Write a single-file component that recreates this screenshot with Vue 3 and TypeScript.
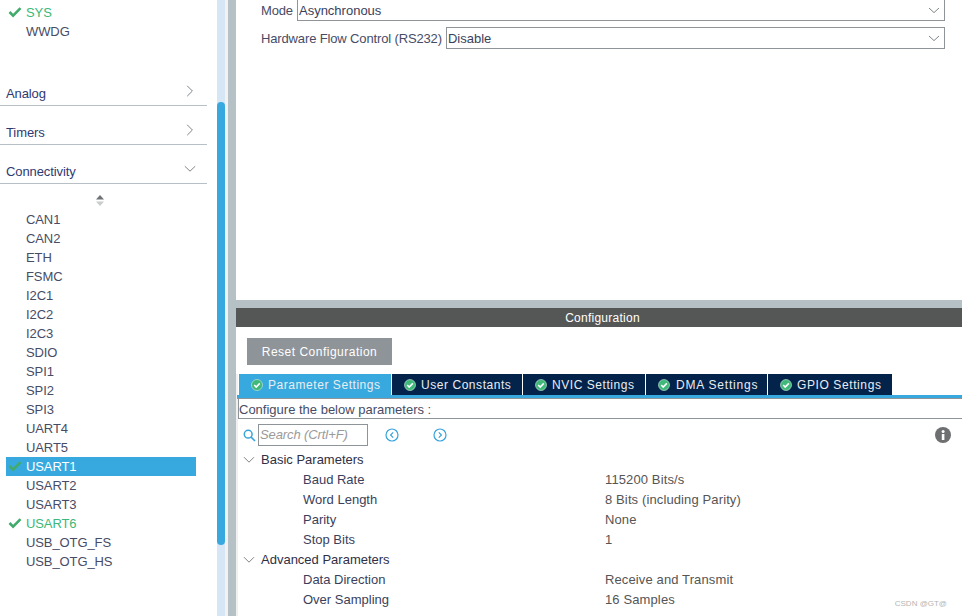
<script setup lang="ts">
interface Peripheral {
  name: string
  status?: 'ok'
  selected?: boolean
}

const topItems: Peripheral[] = [{ name: 'SYS', status: 'ok' }, { name: 'WWDG' }]

const connectivity: Peripheral[] = [
  { name: 'CAN1' },
  { name: 'CAN2' },
  { name: 'ETH' },
  { name: 'FSMC' },
  { name: 'I2C1' },
  { name: 'I2C2' },
  { name: 'I2C3' },
  { name: 'SDIO' },
  { name: 'SPI1' },
  { name: 'SPI2' },
  { name: 'SPI3' },
  { name: 'UART4' },
  { name: 'UART5' },
  { name: 'USART1', status: 'ok', selected: true },
  { name: 'USART2' },
  { name: 'USART3' },
  { name: 'USART6', status: 'ok' },
  { name: 'USB_OTG_FS' },
  { name: 'USB_OTG_HS' }
]

const categories = [
  { name: 'Analog', open: false },
  { name: 'Timers', open: false },
  { name: 'Connectivity', open: true }
]

const tabs = ['Parameter Settings', 'User Constants', 'NVIC Settings', 'DMA Settings', 'GPIO Settings']

const groups = [
  {
    title: 'Basic Parameters',
    rows: [
      ['Baud Rate', '115200 Bits/s'],
      ['Word Length', '8 Bits (including Parity)'],
      ['Parity', 'None'],
      ['Stop Bits', '1']
    ]
  },
  {
    title: 'Advanced Parameters',
    rows: [
      ['Data Direction', 'Receive and Transmit'],
      ['Over Sampling', '16 Samples']
    ]
  }
]
</script>

<template>
  <div class="app">
    <aside class="sidebar">
      <div class="sidebar__content">
        <ul class="periph periph--top">
          <li v-for="item in topItems" :key="item.name" class="periph__row" :class="{ 'periph__row--ok': item.status }">
            <svg v-if="item.status" class="periph__check" width="14" height="12" viewBox="0 0 14 12" aria-hidden="true">
              <path d="M1.5 6l3.6 3.6L12.5 2.2" fill="none" stroke="#41ab6b" stroke-width="2.6" />
            </svg>
            <span>{{ item.name }}</span>
          </li>
        </ul>
        <div v-for="cat in categories" :key="cat.name" class="category">
          <span>{{ cat.name }}</span>
          <svg v-if="cat.open" class="category__icon category__icon--open" width="12" height="8" viewBox="0 0 12 8" aria-hidden="true">
            <path d="M.8 1.2L6 6.2l5.2-5" fill="none" stroke="#7f8589" stroke-width="1" />
          </svg>
          <svg v-else class="category__icon" width="8" height="12" viewBox="0 0 8 12" aria-hidden="true">
            <path d="M1.2.8L6.4 6l-5.2 5.2" fill="none" stroke="#7f8589" stroke-width="1" />
          </svg>
        </div>
        <div class="sorter">
          <svg width="10" height="12" viewBox="0 0 10 12" aria-hidden="true">
            <path d="M5 0L9 4.5H1z" fill="#6f7376" />
            <path d="M1 6.5h8L5 11z" fill="#c9cccd" />
          </svg>
        </div>
        <ul class="periph">
          <li
            v-for="item in connectivity"
            :key="item.name"
            class="periph__row"
            :class="{ 'periph__row--ok': item.status, 'periph__row--selected': item.selected }"
          >
            <svg v-if="item.status" class="periph__check" width="14" height="12" viewBox="0 0 14 12" aria-hidden="true">
              <path d="M1.5 6l3.6 3.6L12.5 2.2" fill="none" stroke="#41ab6b" stroke-width="2.6" />
            </svg>
            <span>{{ item.name }}</span>
          </li>
        </ul>
      </div>
      <div class="scrollbar"><div class="scrollbar__thumb" /></div>
      <div class="gutter" />
    </aside>

    <main class="main">
      <section class="mode">
        <div class="field field--first">
          <label>Mode</label>
          <div class="select">
            <span>Asynchronous</span>
            <svg width="12" height="7" viewBox="0 0 12 7" aria-hidden="true"><path d="M1 1l5 4.6L11 1" fill="none" stroke="#7f8589" /></svg>
          </div>
        </div>
        <div class="field">
          <label>Hardware Flow Control (RS232)</label>
          <div class="select">
            <span>Disable</span>
            <svg width="12" height="7" viewBox="0 0 12 7" aria-hidden="true"><path d="M1 1l5 4.6L11 1" fill="none" stroke="#7f8589" /></svg>
          </div>
        </div>
      </section>

      <section class="config">
        <header class="config__title">Configuration</header>
        <button class="reset" type="button">Reset Configuration</button>
        <div class="config__body">
          <div class="tabs">
            <div v-for="(tab, i) in tabs" :key="tab" class="tab" :class="{ 'tab--active': i === 0 }">
              <svg width="12" height="12" viewBox="0 0 12 12" aria-hidden="true">
                <circle cx="6" cy="6" r="5.5" fill="#3fb87a" />
                <circle cx="6" cy="6" r="5.5" fill="none" stroke="#cfeedd" stroke-width=".6" />
                <path d="M3.2 6l2 2 3.6-3.6" fill="none" stroke="#fff" stroke-width="1.6" />
              </svg>
              <span>{{ tab }}</span>
            </div>
          </div>
          <div class="tabs__rule" />
          <div class="hint">Configure the below parameters :</div>
          <div class="toolbar">
            <svg class="toolbar__search" width="13" height="13" viewBox="0 0 13 13" aria-hidden="true">
              <circle cx="5.2" cy="5.2" r="3.9" fill="none" stroke="#38a3dc" stroke-width="1.5" />
              <path d="M8 8l4 4" stroke="#38a3dc" stroke-width="1.7" />
            </svg>
            <div class="search">Search (Crtl+F)</div>
            <svg class="toolbar__nav" width="14" height="14" viewBox="0 0 14 14" aria-hidden="true">
              <circle cx="7" cy="7" r="6" fill="none" stroke="#38a3dc" stroke-width="1.2" />
              <path d="M8.2 4.4L5.6 7l2.6 2.6" fill="none" stroke="#38a3dc" stroke-width="1.2" />
            </svg>
            <svg class="toolbar__nav toolbar__nav--next" width="14" height="14" viewBox="0 0 14 14" aria-hidden="true">
              <circle cx="7" cy="7" r="6" fill="none" stroke="#38a3dc" stroke-width="1.2" />
              <path d="M5.8 4.4L8.4 7l-2.6 2.6" fill="none" stroke="#38a3dc" stroke-width="1.2" />
            </svg>
            <svg class="toolbar__info" width="16" height="16" viewBox="0 0 16 16" aria-hidden="true">
              <circle cx="8" cy="8" r="8" fill="#6d6f71" />
              <rect x="6.8" y="7" width="2.6" height="6" fill="#fff" />
              <circle cx="8.1" cy="4.4" r="1.5" fill="#fff" />
            </svg>
          </div>
          <div class="params">
            <template v-for="group in groups" :key="group.title">
              <div class="params__group">
                <svg width="12" height="8" viewBox="0 0 12 8" aria-hidden="true"><path d="M1 1.2l5 5 5-5" fill="none" stroke="#7f8589" /></svg>
                <span>{{ group.title }}</span>
              </div>
              <div v-for="row in group.rows" :key="row[0]" class="params__row">
                <span>{{ row[0] }}</span>
                <span class="params__value">{{ row[1] }}</span>
              </div>
            </template>
          </div>
          <div class="watermark">CSDN @GT@</div>
        </div>
      </section>
    </main>
  </div>
</template>

<style>
html,
body {
  margin: 0;
  overflow: hidden;
  background: #fff;
}
</style>

<style scoped>
.app {
  width: 962px;
  height: 616px;
  display: flex;
  overflow: hidden;
  background: #fff;
  color: #3a3f5c;
  font-family: "Liberation Sans", Arial, sans-serif;
  font-size: 13px;
}

ul {
  list-style: none;
  margin: 0;
  padding: 0;
}

.sidebar {
  width: 236px;
  flex-shrink: 0;
  display: flex;
}

.sidebar__content {
  width: 217px;
  flex-shrink: 0;
  padding-top: 3px;
  box-sizing: border-box;
  letter-spacing: -.1px;
}

.periph {
  width: 190px;
  margin-left: 6px;
}

.periph--top {
  height: 65px;
}

.periph__row {
  height: 19px;
  line-height: 19px;
  padding-left: 20px;
  position: relative;
  color: #474c66;
}

.periph__row--ok {
  color: #3cb878;
}

.periph__row--selected {
  background: #38a9de;
  color: #fff;
}

.periph__check {
  position: absolute;
  left: 2px;
  top: 3px;
}

.category {
  width: 207px;
  height: 38px;
  margin-bottom: 1px;
  box-sizing: border-box;
  padding: 0 13px 0 6px;
  border-bottom: 1px solid #b6c0c6;
  display: flex;
  align-items: flex-end;
  justify-content: space-between;
  color: #2f3a72;
  line-height: 22px;
}

.category__icon {
  margin-bottom: 8px;
}

.category__icon--open {
  margin: 0 -2px 10px 0;
}

.sorter {
  height: 25px;
  padding-left: 95px;
  padding-top: 10px;
  box-sizing: border-box;
  line-height: 0;
}

.scrollbar {
  width: 8px;
  flex-shrink: 0;
  background: #d6e6f5;
  position: relative;
}

.scrollbar__thumb {
  position: absolute;
  left: 0;
  right: 0;
  top: 102px;
  height: 443px;
  border-radius: 4px;
  background: #38a9de;
}

.gutter {
  width: 11px;
  flex-shrink: 0;
  background: linear-gradient(to right, #f2f2f2 3px, #b6c1c6 3px);
}

.main {
  flex: 1;
  min-width: 0;
  display: flex;
  flex-direction: column;
}

.mode {
  height: 300px;
  flex-shrink: 0;
  box-sizing: border-box;
  padding: 0 17px 0 25px;
}

.field {
  display: flex;
  align-items: center;
  gap: 4px;
  height: 22px;
  margin-top: 6px;
}

.field--first {
  margin-top: 0;
  height: 21px;
}

.field--first .select {
  border-top: 0;
}

.field label {
  color: #474c66;
  white-space: nowrap;
  letter-spacing: -.14px;
}

.select {
  flex: 1;
  height: 100%;
  box-sizing: border-box;
  border: 1px solid #8f9499;
  display: flex;
  align-items: center;
  justify-content: space-between;
  padding: 0 4px 0 1px;
  color: #3a3f5c;
}

.config {
  flex: 1;
  min-height: 0;
  border-top: 8px solid #b6c1c6;
  display: flex;
  flex-direction: column;
}

.config__title {
  height: 19px;
  line-height: 20px;
  padding-left: 7px;
  background: #555756;
  color: #fff;
  text-align: center;
  font-size: 12px;
  letter-spacing: .25px;
}

.reset {
  width: 145px;
  height: 27px;
  margin: 11px 0 9px 11px;
  padding: 0;
  border: 0;
  background: #8f9499;
  color: #fff;
  font: inherit;
  font-size: 12px;
  letter-spacing: .5px;
}

.config__body {
  flex: 1;
  min-height: 0;
  border-left: 2px solid #f0f0f0;
  position: relative;
}

.tabs {
  display: grid;
  grid-template-columns: 153px 131px 123px 122px 124px;
  justify-content: start;
  height: 21px;
  padding-left: 1px;
}

.tab {
  display: flex;
  align-items: center;
  gap: 5px;
  box-sizing: border-box;
  padding-left: 12px;
  border-right: 1px solid #fff;
  background: #03234b;
  color: #e9edf2;
  font-size: 12px;
  letter-spacing: .55px;
}

.tab:nth-child(4) {
  letter-spacing: .8px;
  gap: 6px;
}

.tab:last-child {
  border-right: 0;
  letter-spacing: .6px;
}

.tab--active {
  background: #38a9de;
}

.tabs__rule {
  height: 3px;
  background: #38a9de;
  border-bottom: 1px solid #8f9499;
  margin-left: -1px;
}

.hint {
  height: 20px;
  line-height: 22px;
  box-sizing: border-box;
  border-left: 1px solid #8f9499;
  border-bottom: 1px solid #8f9499;
  padding-left: 0;
  color: #474c66;
}

.toolbar {
  display: flex;
  align-items: center;
  height: 24px;
  margin-top: 4px;
  padding: 0 11px 0 5px;
}

.toolbar__search {
  flex-shrink: 0;
  margin-right: 2px;
}

.search {
  width: 110px;
  height: 22px;
  line-height: 20px;
  box-sizing: border-box;
  border: 1px solid #8f9499;
  padding-left: 1px;
  color: #9a9a9a;
  font-style: italic;
  letter-spacing: -.1px;
}

.toolbar__nav {
  margin-left: 17px;
}

.toolbar__nav--next {
  margin-left: 34px;
}

.toolbar__info {
  margin-left: auto;
}

.params {
  padding-top: 3px;
}

.params__group {
  height: 20px;
  line-height: 20px;
  display: flex;
  align-items: center;
  gap: 6px;
  padding-left: 5px;
  color: #2f2f45;
}

.params__row {
  height: 20px;
  line-height: 20px;
  display: flex;
  padding-left: 65px;
}

.params__row span:first-child {
  width: 302px;
}

.params__value {
  color: #555;
  letter-spacing: .12px;
}

.watermark {
  position: absolute;
  right: 15px;
  bottom: 8px;
  font-size: 8px;
  color: #b5b5b5;
}
</style>
